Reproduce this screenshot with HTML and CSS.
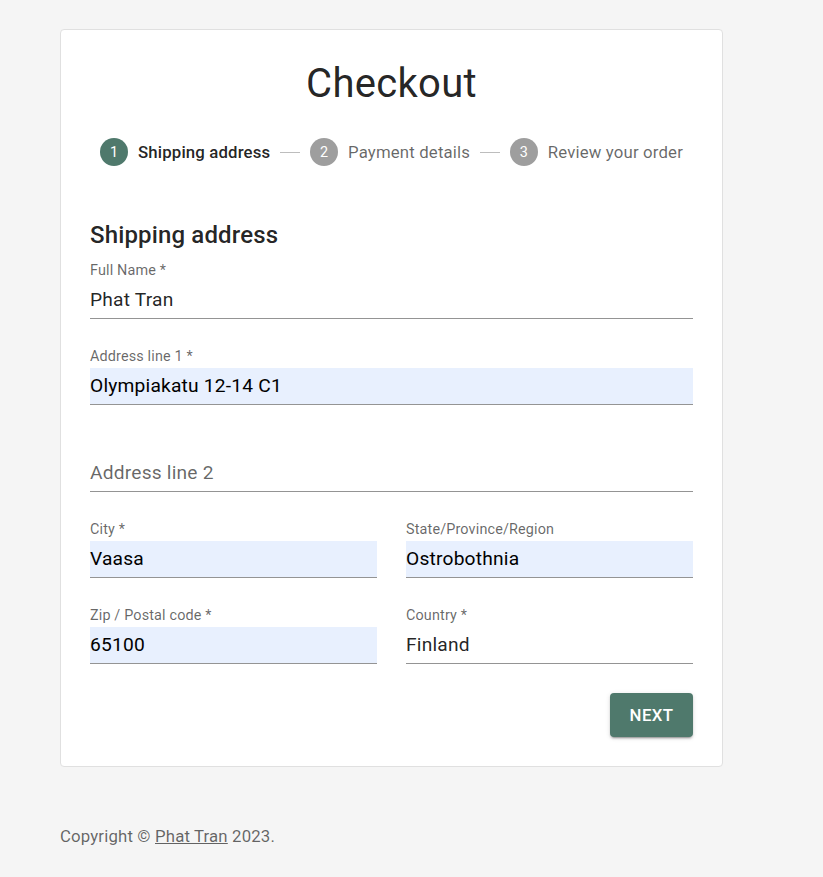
FILE: index.html
```html
<!DOCTYPE html>
<html lang="en">
<head>
<meta charset="utf-8">
<title>Checkout</title>
<link rel="stylesheet" href="styles.css">
</head>
<body>
<main class="page">
  <section class="card">
    <h1 class="title">Checkout</h1>
    <div class="stepper">
      <div class="step active"><span class="step-icon">1</span><span class="step-label">Shipping address</span></div>
      <div class="connector"></div>
      <div class="step"><span class="step-icon">2</span><span class="step-label">Payment details</span></div>
      <div class="connector"></div>
      <div class="step"><span class="step-icon">3</span><span class="step-label">Review your order</span></div>
    </div>
    <h2 class="section-title">Shipping address</h2>
    <div class="form">
      <div class="field full">
        <div class="label">Full Name *</div>
        <div class="input">Phat Tran</div>
      </div>
      <div class="field full">
        <div class="label">Address line 1 *</div>
        <div class="input autofill">Olympiakatu 12-14 C1</div>
      </div>
      <div class="field full optional">
        <div class="label"></div>
        <div class="input placeholder">Address line 2</div>
      </div>
      <div class="field">
        <div class="label">City *</div>
        <div class="input autofill">Vaasa</div>
      </div>
      <div class="field">
        <div class="label">State/Province/Region</div>
        <div class="input autofill">Ostrobothnia</div>
      </div>
      <div class="field">
        <div class="label">Zip / Postal code *</div>
        <div class="input autofill">65100</div>
      </div>
      <div class="field">
        <div class="label">Country *</div>
        <div class="input">Finland</div>
      </div>
    </div>
    <div class="actions">
      <button class="btn" type="button">Next</button>
    </div>
  </section>
  <footer class="footer">Copyright © <a class="footer-link" href="#">Phat Tran</a> 2023.</footer>
</main>
</body>
</html>
```
FILE: styles.css
```css
* { box-sizing: border-box; }
html, body {
  margin: 0;
  padding: 0;
  background: #f5f5f5;
  font-family: Roboto, "Liberation Sans", Arial, sans-serif;
  color: rgba(0,0,0,0.87);
}
.page {
  padding: 29px 0 0 60px;
}
.card {
  width: 663px;
  background: #fff;
  border: 1px solid #e0e0e0;
  border-radius: 4px;
  padding: 29px 29px 29px 29px;
}
.title {
  margin: 0;
  font-size: 40px;
  line-height: 50px;
  font-weight: 400;
  text-align: center;
  letter-spacing: 0.3px;
  color: rgba(0,0,0,0.87);
}
.stepper {
  display: flex;
  align-items: center;
  margin-top: 29px;
  height: 28px;
}
.step {
  display: flex;
  align-items: center;
  padding: 0 10px;
}
.step-icon {
  width: 28px;
  height: 28px;
  border-radius: 50%;
  background: #9e9e9e;
  color: #fff;
  font-size: 14.4px;
  display: flex;
  align-items: center;
  justify-content: center;
}
.step-label {
  margin-left: 10px;
  font-size: 16.8px;
  color: rgba(0,0,0,0.6);
  letter-spacing: 0.15px;
}
.step.active .step-icon { background: #4f796c; }
.step.active .step-label { color: rgba(0,0,0,0.87); font-weight: 500; }
.connector {
  flex: 1;
  border-top: 1px solid #bdbdbd;
}
.section-title {
  margin: 51px 0 0 0;
  font-size: 24px;
  line-height: 36px;
  font-weight: 500;
  letter-spacing: 0.15px;
}
.form {
  margin-top: 8px;
  display: grid;
  grid-template-columns: 1fr 1fr;
  column-gap: 29px;
  row-gap: 28px;
}
.field.full { grid-column: 1 / -1; }
.field.optional { margin-top: 1px; }
.label {
  height: 20px;
  line-height: 20px;
  margin-bottom: 1px;
  font-size: 14.4px;
  color: rgba(0,0,0,0.6);
  letter-spacing: 0.15px;
}
.input {
  height: 37px;
  line-height: 36px;
  border-bottom: 1px solid #949494;
  font-size: 19.2px;
  letter-spacing: 0.2px;
  color: rgba(0,0,0,0.87);
}
.input.autofill {
  background: #e8f0fe;
  color: #000;
}
.input.placeholder {
  color: rgba(0,0,0,0.6);
}
.actions {
  display: flex;
  justify-content: flex-end;
  margin-top: 29px;
}
.btn {
  height: 44px;
  width: 83px;
  border: none;
  border-radius: 4px;
  background: #4f796c;
  color: #fff;
  font-family: Roboto, "Liberation Sans", Arial, sans-serif;
  font-size: 16.8px;
  font-weight: 500;
  letter-spacing: 0.4px;
  text-transform: uppercase;
  box-shadow: 0 3px 1px -2px rgba(0,0,0,0.2), 0 2px 2px 0 rgba(0,0,0,0.14), 0 1px 5px 0 rgba(0,0,0,0.12);
  cursor: pointer;
}
.footer {
  margin-top: 59px;
  font-size: 16.8px;
  line-height: 20px;
  color: rgba(0,0,0,0.6);
  letter-spacing: 0.15px;
}
.footer-link {
  color: rgba(0,0,0,0.6);
  text-decoration: underline;
}
```
